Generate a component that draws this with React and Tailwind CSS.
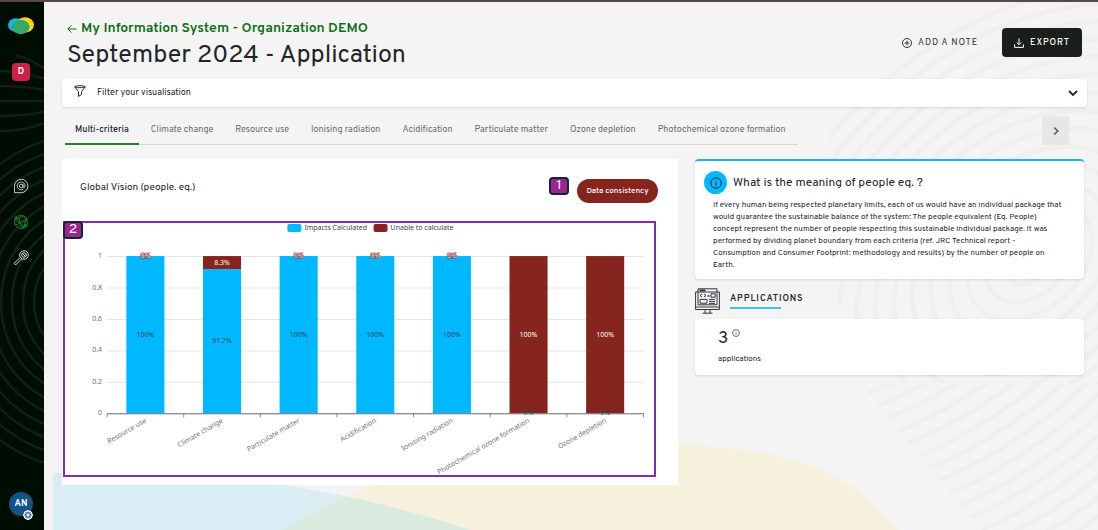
import React from "react";

const rings = (n, start, step) => Array.from({ length: n }, (_, i) => start + i * step);

const tabs = [
  "Multi-criteria",
  "Climate change",
  "Resource use",
  "Ionising radiation",
  "Acidification",
  "Particulate matter",
  "Ozone depletion",
  "Photochemical ozone formation",
];

const bars = [
  { name: "Resource use", ok: 100 },
  { name: "Climate change", ok: 91.7 },
  { name: "Particulate matter", ok: 100 },
  { name: "Acidification", ok: 100 },
  { name: "Ionising radiation", ok: 100 },
  { name: "Photochemical ozone formation", ok: 0 },
  { name: "Ozone depletion", ok: 0 },
];

function InfoIcon({ className }) {
  return (
    <svg className={className} viewBox="0 0 12 12" fill="none" stroke="currentColor" aria-hidden="true">
      <circle cx="6" cy="6" r="5.2" />
      <path d="M6 5.4v3.2M6 3.3v1" />
    </svg>
  );
}

function Sidebar() {
  return (
    <aside className="relative w-11 shrink-0 overflow-hidden bg-[#000d02]">
      <svg className="absolute top-0 left-0 h-[530px] w-11" viewBox="0 0 44 530" fill="none" stroke="#111f14" strokeWidth="2.6" aria-hidden="true">
        {rings(10, 50, 11).map((r) => (
          <ellipse key={r} cx="84" cy="300" rx={r} ry={r * 1.12} />
        ))}
        {rings(6, 0, 1).map((i) => (
          <path key={i} d={`M${i === 0 ? 16 : 0} ${54 + i * 15}Q24 ${54 + i * 15} 44 ${66 + i * 11}`} />
        ))}
      </svg>
      <div className="relative flex min-h-[528px] flex-col items-center pt-[15px] pr-0.5">
        <a href="#home" aria-label="Home">
          <svg className="h-[18px] w-[26px]" viewBox="0 0 26 18" aria-hidden="true">
            <ellipse cx="8" cy="8" rx="8" ry="6.8" fill="#12b5ee" />
            <ellipse cx="17" cy="7.8" rx="9" ry="7.6" fill="#fbd313" />
            <ellipse cx="12.7" cy="10" rx="9" ry="7.2" fill="#33a96c" />
          </svg>
        </a>
        <a href="#demo" className="mt-7 flex h-[18px] w-[18px] items-center justify-center rounded bg-[#cd2049] text-[9px] font-bold text-white">D</a>
        <nav className="mt-[97px] flex flex-col gap-5 text-[#d5dad5]" aria-label="Main">
          <a href="#organization" aria-label="Organization">
            <svg className="h-4 w-4" viewBox="0 0 16 16" fill="none" stroke="currentColor" strokeWidth="0.9" aria-hidden="true">
              <path d="M1.5 14.8V8a6.7 6.7 0 1 1 6.7 6.7H1.5" />
              <circle cx="8.2" cy="8" r="1.8" />
              <path d="M10 6v2.8c0 1.6 2 1.3 2-.8a3.9 3.9 0 1 0-1.8 3.2" />
            </svg>
          </a>
          <a href="#systems" aria-label="Information systems" className="text-[#0b8c1a]">
            <svg className="h-4 w-4" viewBox="0 0 16 16" fill="none" stroke="currentColor" aria-hidden="true">
              <circle cx="8" cy="8" r="6.4" />
              <path d="M2 5l4-1 5-2.3M6 4l1 5 6.5-4M7 9l-5 2.5M7 9l3 5M10 14l3.6-9M2 5l5 4M11 1.7L13.5 5M10 14l4.2-4" />
              <circle cx="3" cy="4" r="1.3" />
              <circle cx="12.5" cy="11.8" r="1.3" />
            </svg>
          </a>
          <a href="#services" aria-label="Digital services">
            <svg className="h-4 w-4" viewBox="0 0 16 16" fill="none" stroke="currentColor" aria-hidden="true">
              <circle cx="11" cy="5" r="4.3" />
              <circle cx="11" cy="5" r="2.3" />
              <path d="M7.5 7.2L1 13.4 2.6 15l6.2-6.3M9.4 3.4l3.2 3.2" />
            </svg>
          </a>
        </nav>
        <button type="button" aria-label="Account settings" className="relative mt-auto mb-3.5 flex h-6 w-6 items-center justify-center rounded-full bg-[#145288] text-[9px] font-bold text-white">
          AN
          <svg className="absolute right-0 -bottom-1 h-2.5 w-2.5" viewBox="0 0 12 12" fill="#145288" stroke="#fff" strokeWidth="1.5" aria-hidden="true">
            <path d="M5 .9h2l.4 1.3 1.4-.5 1.4 1.4-.5 1.3 1.4.5v2l-1.4.5.5 1.4-1.4 1.4-1.4-.5L7 11.1H5l-.4-1.4-1.4.5-1.4-1.4.5-1.4L.9 7V5l1.4-.6-.5-1.3 1.4-1.4 1.4.5z" />
            <circle cx="6" cy="6" r="1.3" />
          </svg>
        </button>
      </div>
    </aside>
  );
}

function Backdrop() {
  const blue = "M53 473H180C270 478 380 500 470 530V536H53z";
  return (
    <svg className="absolute inset-0 h-full w-full" viewBox="44 2 1054 528" preserveAspectRatio="xMinYMin slice" aria-hidden="true">
      <defs>
        <clipPath id="upper">
          <path d="M870 0H1100V384H900L830 290V130z" />
        </clipPath>
        <clipPath id="lower">
          <path d="M860 384H1100V540H990z" />
        </clipPath>
        <clipPath id="blue">
          <path d={blue} />
        </clipPath>
      </defs>
      <g fill="none" stroke="#efefef" strokeWidth="5" clipPath="url(#upper)">
        {rings(15, 20, 15).map((r) => (
          <ellipse key={r} cx="1030" cy="260" rx={r * 1.4} ry={r} transform="rotate(-42 1030 260)" />
        ))}
      </g>
      <g fill="none" stroke="#efefef" strokeWidth="5" clipPath="url(#lower)">
        {rings(20, 0, 1).map((i) => (
          <path key={i} d={`M${855 + i * 9} ${398 + i * 13}Q${990 + i * 9} ${350 + i * 13} ${1110 + i * 9} ${200 + i * 13}`} />
        ))}
      </g>
      <path d="M284 530C360 480 470 443 640 444S850 475 898 530V536H284z" fill="#f6f1dc" />
      <path d={blue} fill="#dbedf4" />
      <path d="M284 530C360 480 470 443 640 444V536H284z" fill="#dbeadf" clipPath="url(#blue)" />
    </svg>
  );
}

function Header() {
  return (
    <header className="flex items-start justify-between pr-[5px] pl-[5px]">
      <div>
        <a href="#back" className="flex items-center gap-1 text-[14px] leading-4 font-semibold text-[#0d6b12]">
          <svg className="h-2.5 w-2.5" viewBox="0 0 10 10" fill="none" stroke="currentColor" aria-hidden="true">
            <path d="M9.5 5H1M4.5 1.3L.8 5l3.7 3.7" />
          </svg>
          My Information System - Organization DEMO
        </a>
        <h1 className="mt-[3px] text-[25px] leading-8 text-[#212529]">September 2024 - Application</h1>
      </div>
      <div className="mt-[7px] flex items-center gap-6">
        <button type="button" className="flex items-center gap-1.5 text-[9px] tracking-widest text-[#333]">
          <svg className="h-2.5 w-2.5" viewBox="0 0 10 10" fill="none" stroke="currentColor" aria-hidden="true">
            <circle cx="5" cy="5" r="4.5" />
            <path d="M5 2.6v4.8M2.6 5h4.8" />
          </svg>
          ADD A NOTE
        </button>
        <button type="button" className="flex h-[29px] w-20 items-center justify-center gap-1.5 rounded-sm bg-[#1b1f1c] text-[9px] font-medium tracking-widest text-white">
          <svg className="h-2.5 w-2.5" viewBox="0 0 10 10" fill="none" stroke="currentColor" aria-hidden="true">
            <path d="M5 .5v6M2.8 4.5L5 6.7l2.2-2.2M.6 6.4v3h8.8v-3" />
          </svg>
          EXPORT
        </button>
      </div>
    </header>
  );
}

function Chart() {
  const top = 33;
  const height = 157;
  const base = top + height;
  const left = 42;
  const step = 76.5;
  return (
    <svg className="block w-full overflow-visible font-['Noto_Sans',sans-serif]" viewBox="0 0 588 252" fontSize="7" role="img" aria-label="Impacts calculated by criterion">
      <rect x="222" y="1" width="14" height="8" rx="2" fill="#00b8ff" />
      <text x="239" y="7" fill="#444">Impacts Calculated</text>
      <rect x="308" y="1" width="14" height="8" rx="2" fill="#85251e" />
      <text x="325" y="7" fill="#444">Unable to calculate</text>
      {[0, 0.2, 0.4, 0.6, 0.8, 1].map((v) => (
        <g key={v}>
          <path d={`M${left} ${base - v * height + 0.5}H${left + step * 7}`} stroke="#e3e5ea" />
          <text x="37" y={base - v * height + 2} textAnchor="end" fill="#6e7079">{v}</text>
        </g>
      ))}
      {bars.map((b, i) => {
        const cx = left + step * (i + 0.5);
        const okH = (height * b.ok) / 100;
        const bad = Math.round((100 - b.ok) * 10) / 10;
        return (
          <g key={b.name} textAnchor="middle">
            <rect x={cx - 19} y={base - okH} width="38" height={okH} fill="#00b8ff" />
            <rect x={cx - 19} y={top} width="38" height={height - okH} fill="#85251e" />
            <text x={cx} y={base - okH / 2 + 2} fill="#20475a">{b.ok}%</text>
            <text x={cx} y={top + (height - okH) / 2 + 2} fill="#fff" stroke={bad ? "none" : "#85251e"} strokeWidth="1.2" paintOrder="stroke">{bad}%</text>
            <text x={cx} y={base + 9} textAnchor="end" fill="#6e7079" transform={`rotate(-30 ${cx} ${base + 6})`}>{b.name}</text>
          </g>
        );
      })}
      <path d={`M${left} ${base + 0.5}H${left + step * 7}`} stroke="#6e7079" />
      {rings(8, 0, 1).map((i) => (
        <path key={i} d={`M${left + step * i} ${base}v4`} stroke="#6e7079" strokeWidth="0.8" />
      ))}
    </svg>
  );
}

const badge = "flex h-[18px] w-5 justify-center rounded-sm border-2 border-[#10263b] bg-[#9c2591] text-[14px] leading-[14px] text-white";

function VisionCard() {
  return (
    <section className="bg-white pt-[18px] pb-2">
      <div className="flex items-start justify-between pr-5 pl-[18px]">
        <h2 className="text-[10px] leading-[22px] text-[#212529]">Global Vision (people. eq.)</h2>
        <div className="flex items-start gap-2">
          <span className={badge}>1</span>
          <button type="button" className="mt-0.5 h-6 w-[81px] rounded-full bg-[#85251e] text-[8px] font-medium text-white">Data consistency</button>
        </div>
      </div>
      <div className="relative mt-[18px] mr-[22px] ml-px border-2 border-[#7a2fb4]">
        <div className="absolute -top-0.5 -left-0.5">
          <span className={badge}>2</span>
        </div>
        <Chart />
      </div>
    </section>
  );
}

function SidePanel() {
  return (
    <aside className="text-[#212529]">
      <section className="rounded-sm border-t-2 border-[#1cb3e6] bg-white px-[9px] pt-2.5 pb-2 shadow-sm">
        <div className="flex items-center gap-1.5">
          <span className="flex h-[23px] w-[23px] items-center justify-center rounded-full bg-[#00b8ff]">
            <InfoIcon className="h-3 w-3" />
          </span>
          <h2 className="text-[12px]">What is the meaning of people eq. ?</h2>
        </div>
        <p className="mt-[5px] pr-3 pl-[9px] text-[8px] leading-3">
          If every human being respected planetary limits, each of us would have an individual package that would guarantee the sustainable balance of the system: The people equivalent (Eq. People) concept represent the number of people respecting this sustainable individual package. It was performed by dividing planet boundary from each criteria (ref. JRC Technical report - Consumption and Consumer Footprint: methodology and results) by the number of people on Earth.
        </p>
      </section>
      <div className="mt-[9px] flex items-center gap-2.5">
        <svg className="h-[26px] w-[25px]" viewBox="0 0 25 26" fill="none" stroke="#30363a" aria-hidden="true">
          <path d="M3 4H.6v17.5h23.8V4H22M.6 19h23.8M10 21.5v3.5M15 21.5v3.5M7.5 25.2h10" />
          <path d="M3 .8h19v16H3zM3 4h19" />
          <path d="M4.5 2.4h6" strokeWidth="2" />
          <path d="M7 6L5 7.5 7 9M9 6l2 1.5L9 9M12 8h3M16 5.8h4.2v3.4H16zM5 11.4h7v3.8H5zM14 11.4h6M14 13.4h6M14 15.4h6" />
        </svg>
        <h2 className="text-[9px] leading-3 font-semibold tracking-widest after:mt-0.5 after:block after:h-0.5 after:w-[51px] after:bg-[#41c3ee]">APPLICATIONS</h2>
      </div>
      <section className="mt-[5px] rounded-sm bg-white px-[23px] pt-2.5 pb-2.5 shadow-sm">
        <p className="flex items-start gap-1 text-[17px] leading-5">
          3 <InfoIcon className="h-2 w-2" />
        </p>
        <p className="mt-1 text-[8px] leading-3">applications</p>
      </section>
    </aside>
  );
}

export default function App() {
  return (
    <div className="flex min-h-screen border-t-2 border-[#59474c] bg-[#f4f4f4] font-[Overpass,Roboto,sans-serif]">
      <Sidebar />
      <div className="relative min-w-0 flex-1">
        <Backdrop />
        <div className="relative pt-[19px] pr-[11px] pl-[18px]">
          <Header />
          <button type="button" className="mt-[7px] flex h-7 w-full items-center rounded-sm bg-white pr-[9px] pl-3 text-[9px] text-[#212529] shadow-sm">
            <svg className="mr-[11px] mb-1 h-3 w-3" viewBox="0 0 12 12" fill="none" stroke="currentColor" aria-hidden="true">
              <path d="M.7 1.8c0-1.5 10.6-1.5 10.6 0L7.5 6.6v3l-3 1.8V6.6zM.7 1.8c1.2 1.2 9.4 1.2 10.6 0" />
            </svg>
            Filter your visualisation
            <svg className="ml-auto h-2.5 w-2.5" viewBox="0 0 10 10" fill="none" stroke="currentColor" strokeWidth="1.8" aria-hidden="true">
              <path d="M1 3l4 4 4-4" />
            </svg>
          </button>
          <div className="mt-[9px] flex items-start justify-between pr-[18px] pl-[3px]">
            <div role="tablist" className="flex gap-0.5 border-b border-[#d6d6d6] pr-0.5 text-[9px]">
              {tabs.map((t, i) => (
                <button
                  key={t}
                  type="button"
                  role="tab"
                  aria-selected={i === 0}
                  className={
                    i === 0
                      ? "-mb-px h-[29px] border-b-2 border-[#2a7a30] px-2.5 font-medium text-[#212529]"
                      : "h-7 px-2.5 text-[#6b6b6b]"
                  }
                >
                  {t}
                </button>
              ))}
            </div>
            <button type="button" aria-label="Next tabs" className="flex h-[29px] w-[27px] items-center justify-center bg-[#e7e7e7] text-[#2a7a30]">
              <svg className="h-2.5 w-2.5" viewBox="0 0 10 10" fill="none" stroke="currentColor" strokeWidth="1.6" aria-hidden="true">
                <path d="M3.2 1.5L6.8 5 3.2 8.5" />
              </svg>
            </button>
          </div>
          <main className="mt-3.5 grid grid-cols-[616fr_389fr] items-start gap-[17px] pr-[3px]">
            <VisionCard />
            <SidePanel />
          </main>
        </div>
      </div>
    </div>
  );
}
